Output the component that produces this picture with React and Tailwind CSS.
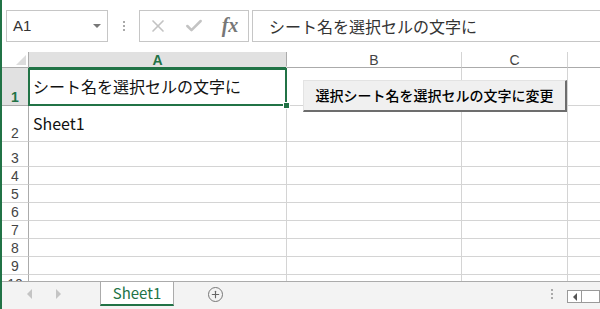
import { X, Check, Plus } from "lucide-react";

const rows = [
  { n: "1", h: "h-[38px]", sel: true, a: "シート名を選択セルの文字に" },
  { n: "2", h: "h-[36px]", a: "Sheet1" },
  { n: "3", h: "h-[25px]" },
  { n: "4", h: "h-[18px]" },
  { n: "5", h: "h-[18px]" },
  { n: "6", h: "h-[18px]" },
  { n: "7", h: "h-[18px]" },
  { n: "8", h: "h-[18px]" },
  { n: "9", h: "h-[18px]" },
  { n: "10", h: "h-[18px]" },
];

export default function App() {
  return (
    <div
      className="w-[600px] h-[309px] flex flex-col bg-white border-l-2 border-[#217346] overflow-hidden text-[#222]"
      style={{ fontFamily: '"Noto Sans CJK JP", "Liberation Sans", sans-serif' }}
    >
      {/* Formula bar */}
      <div className="h-[52px] shrink-0 flex items-start pt-[10px] pl-[4px]">
        <div className="w-[102px] h-[32px] border border-[#c6c6c6] flex items-center justify-between pl-[6px] pr-[6px]">
          <span className="text-[15px] text-[#333]" style={{ fontFamily: '"Liberation Sans", sans-serif' }}>A1</span>
          <span className="w-0 h-0 border-l-[4px] border-r-[4px] border-t-[4px] border-l-transparent border-r-transparent border-t-[#777]" />
        </div>
        <div className="w-[31px] h-[32px] flex flex-col items-center justify-center gap-[2px]">
          <span className="w-[2px] h-[2px] bg-[#aaa]" />
          <span className="w-[2px] h-[2px] bg-[#aaa]" />
          <span className="w-[2px] h-[2px] bg-[#aaa]" />
        </div>
        <div className="w-[110px] h-[32px] border border-[#c6c6c6] grid grid-cols-3 items-center justify-items-center">
          <X size={20} strokeWidth={2} className="text-[#c3c3c3]" />
          <Check size={20} strokeWidth={3} className="text-[#c3c3c3]" />
          <span
            className="text-[20px] italic font-bold text-[#777] leading-none -mt-[2px]"
            style={{ fontFamily: '"Liberation Serif", serif' }}
          >
            fx
          </span>
        </div>
        <div className="flex-1 ml-[3px] h-[32px] border border-r-0 border-[#c6c6c6] flex items-center pl-[16px] text-[16px] text-[#333]">
          シート名を選択セルの文字に
        </div>
      </div>

      {/* Grid */}
      <div className="relative flex-1 overflow-hidden">
        {/* Column headers */}
        <div className="flex h-[16px] text-[14px] leading-none" style={{ fontFamily: '"Liberation Sans", sans-serif' }}>
          <div className="w-[27px] shrink-0 border-r border-b border-[#ababab] relative">
            <span className="absolute right-[2px] bottom-[2px] w-0 h-0 border-b-[10px] border-l-[10px] border-b-[#dcdcdc] border-l-transparent" />
          </div>
          <div className="w-[258px] shrink-0 bg-[#e1e1e1] border-r border-b border-[#ababab] border-b-[#217346] flex items-center justify-center text-[#217346] font-bold">A</div>
          <div className="w-[175px] shrink-0 border-r border-b border-[#d4d4d4] border-b-[#ababab] flex items-center justify-center text-[#444]">B</div>
          <div className="w-[106px] shrink-0 border-r border-b border-[#d4d4d4] border-b-[#ababab] flex items-center justify-center text-[#444]">C</div>
          <div className="flex-1 border-b border-[#ababab]" />
        </div>

        {rows.map((r) => (
          <div key={r.n} className={`flex ${r.h}`}>
            <div
              className={`w-[27px] shrink-0 border-r border-b flex items-end justify-center pb-[1px] text-[14px] leading-none ${
                r.sel
                  ? "bg-[#e1e1e1] border-[#ababab] border-r-[#217346] text-[#217346] font-bold"
                  : "border-[#ababab] border-b-[#d4d4d4] text-[#444]"
              }`}
              style={{ fontFamily: '"Liberation Sans", sans-serif' }}
            >
              {r.n}
            </div>
            <div className="w-[258px] shrink-0 border-r border-b border-[#d4d4d4] flex items-center pl-[4px] -mt-[2px] text-[16px] text-[#111]">
              {r.a}
            </div>
            <div className="w-[175px] shrink-0 border-r border-b border-[#d4d4d4]" />
            <div className="w-[106px] shrink-0 border-r border-b border-[#d4d4d4]" />
            <div className="flex-1 border-b border-[#d4d4d4]" />
          </div>
        ))}

        {/* Selection on A1 */}
        <div className="absolute left-[26px] top-[16px] w-[259px] h-[38px] border-2 border-[#217346] pointer-events-none">
          <span className="absolute -right-[5px] -bottom-[5px] w-[7px] h-[7px] bg-[#217346] border border-white" />
        </div>

        {/* Macro button */}
        <button className="absolute left-[301px] top-[28px] w-[264px] h-[32px] bg-[#f0f0f0] border-t border-l border-[#e3e3e3] border-r-2 border-b-2 border-r-[#6d6d6d] border-b-[#6d6d6d] text-[14px] font-medium text-black flex items-center justify-center">
          選択シート名を選択セルの文字に変更
        </button>
      </div>

      {/* Sheet tabs */}
      <div className="h-[28px] shrink-0 bg-[#f3f3f3] border-t border-[#ababab] flex items-start">
        <div className="w-[98px] h-[24px] flex items-center">
          <span className="ml-[25px] w-0 h-0 border-y-[5px] border-r-[5px] border-y-transparent border-r-[#c4c4c4]" />
          <span className="ml-[24px] w-0 h-0 border-y-[5px] border-l-[5px] border-y-transparent border-l-[#c4c4c4]" />
        </div>
        <div className="w-[74px] h-[24px] bg-white border-x border-[#ababab] border-b-2 border-b-[#217346] flex items-center justify-center text-[15px] text-[#217346]">
          Sheet1
        </div>
        <div className="ml-[34px] h-[24px] flex items-center">
          <span className="w-[15px] h-[15px] rounded-full border border-[#777] flex items-center justify-center">
            <Plus size={11} strokeWidth={2.5} className="text-[#666]" />
          </span>
        </div>
        <div className="flex-1" />
        <div className="h-[24px] flex flex-col items-center justify-center gap-[2px] mr-[14px]">
          <span className="w-[2px] h-[2px] bg-[#aaa]" />
          <span className="w-[2px] h-[2px] bg-[#aaa]" />
          <span className="w-[2px] h-[2px] bg-[#aaa]" />
        </div>
        <div className="mt-[8px] w-[15px] h-[13px] border border-[#9a9a9a] bg-white flex items-center justify-center">
          <span className="w-0 h-0 border-y-[4px] border-r-[4px] border-y-transparent border-r-[#555]" />
        </div>
        <div className="mt-[8px] w-[18px] h-[13px] border border-l-0 border-[#9a9a9a] bg-white" />
      </div>
    </div>
  );
}
